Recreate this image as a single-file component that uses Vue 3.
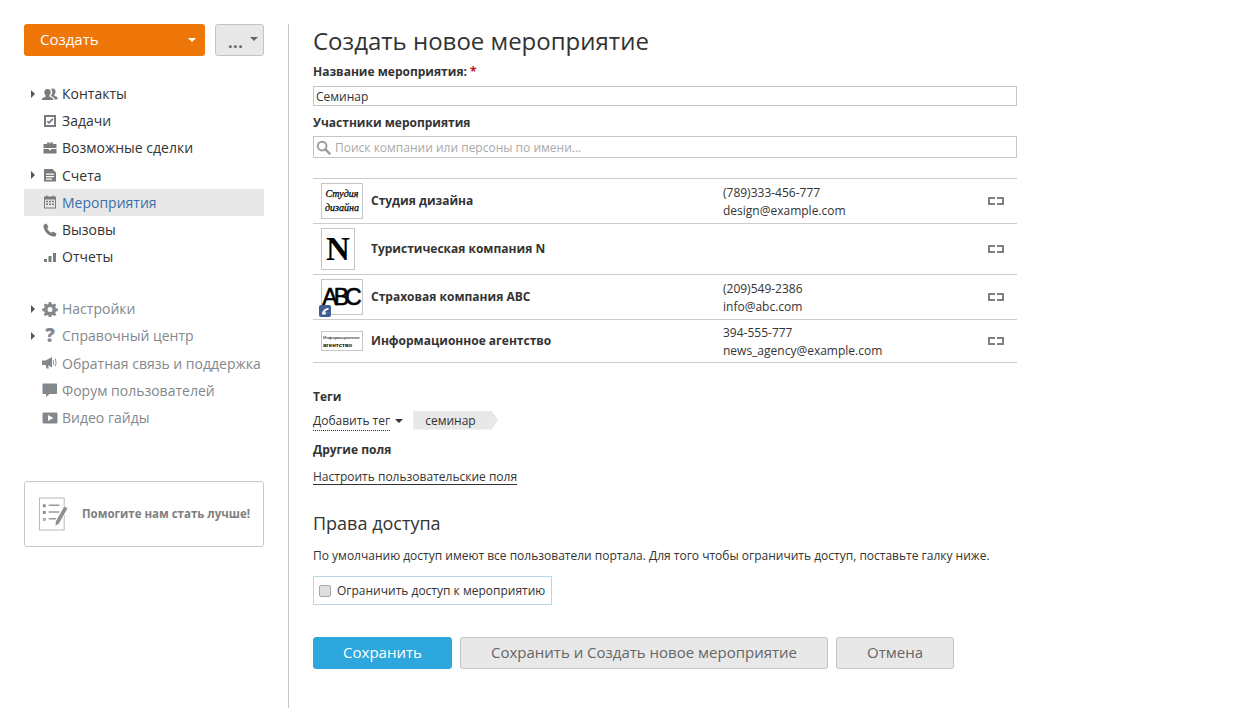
<script setup>
const navMain = [
  { label: 'Контакты', icon: 'contacts', arrow: true },
  { label: 'Задачи', icon: 'tasks' },
  { label: 'Возможные сделки', icon: 'deals' },
  { label: 'Счета', icon: 'invoices', arrow: true },
  { label: 'Мероприятия', icon: 'calendar', active: true },
  { label: 'Вызовы', icon: 'phone' },
  { label: 'Отчеты', icon: 'bars' },
]
const navExtra = [
  { label: 'Настройки', icon: 'gear', arrow: true },
  { label: 'Справочный центр', icon: 'help', arrow: true },
  { label: 'Обратная связь и поддержка', icon: 'mega' },
  { label: 'Форум пользователей', icon: 'forum' },
  { label: 'Видео гайды', icon: 'video' },
]
const icons = {
  contacts: 'M5.500 3a3.200 3.200 0 0 1 3.200 3.200c0 1.400-.6 2.700-1.400 3.300v1.100l3.200 1.400c.6.300.7.800.7 2H0c0-1.200.1-1.700.7-2l3-1.400V9.500C3 8.900 2.400 7.600 2.400 6.200A3.200 3.200 0 0 1 5.500 3zM10.500 2.500a3 3 0 0 1 3 3.100c0 1.300-.5 2.500-1.200 3.100v1l2.800 1.300c.4.200.4 1.100.4 2.500h-3c0-1.300-.4-1.900-1.200-2.300L9 10V9.500c.8-.9 1.300-2.100 1.300-3.400 0-1.300-.5-2.400-1.400-3.100.4-.3.900-.5 1.600-.5z',
  tasks: 'M2 2h12v12H2zM4 4v8h8V4zM7 11L4.700 8.700l1.300-1.300 1 1 3.200-3.200 1.300 1.300z',
  deals: 'M5 4V2.500h6V4h3.500v4h-13V4zm1.300 0h3.400V3.700H6.300zM1.500 9H7v1.200h2V9h5.500v4.500h-13z',
  invoices: 'M2 2h8.500L14 5.500v9H2zM4 6.500v1.200h8V6.500zM4 9v1.200h8V9zM4 11.500v1.200h6v-1.200z',
  calendar: 'M2 2.500h2V1.500h1.500v1h5v-1H12v1h2v12H2zm1 3v8h10v-8zm1 1.200h2v1.600H4zm3 0h2v1.600H7zm3 0h2v1.600h-2zm-6 2.800h2v1.600H4zm3 0h2v1.600H7zm3 0h2v1.600h-2z',
  phone: 'M4.500 1.500l2 3.500-1.300 1.500c.6 1.800 2.300 3.600 4.300 4.300L11 9.500l3.500 2-.6 2.200c-.3.600-1 .8-1.900.8C6.500 14 2 9.500 1.500 4.500c0-1 .2-1.700.8-2z',
  bars: 'M2 10h3v3H2zM6.500 7h3v6h-3zM11 4h3v9h-3z',
  gear: 'M6.800 1h2.400l.4 2 1.300.6 1.800-1.100 1.600 1.600-1.100 1.800.6 1.300 2 .4v2.400l-2 .4-.6 1.300 1.100 1.800-1.600 1.600-1.800-1.100-1.300.6-.4 2H6.800l-.4-2-1.300-.6-1.800 1.100-1.600-1.600 1.100-1.800-.6-1.300-2-.4V7.600l2-.4.6-1.300-1.100-1.800 1.600-1.600 1.800 1.100 1.300-.6zM8 6a2.500 2.500 0 1 0 0 5 2.500 2.500 0 0 0 0-5z',
  mega: 'M0 5.500h3.500L10 2v10.500L6 10.300l.8 3.200H4.500l-.9-3.500H0zM11.500 5c.8 1.200.8 3.800 0 5l-.7-.4c.6-1 .6-3.200 0-4.200zM13.500 3.500c1.300 2.200 1.300 5.800 0 8l-.7-.4c1-2 1-5.200 0-7.200z',
  forum: 'M1.500 1.500h12.500c.6 0 1 .4 1 1v8.500c0 .6-.4 1-1 1H7.500L4 15v-3H1.500c-.6 0-1-.4-1-1V2.500c0-.6.4-1 1-1z',
  video: 'M2 2.500h12c1 0 1.500.5 1.500 1.500v8c0 1-.5 1.500-1.500 1.500H2c-1 0-1.500-.5-1.500-1.500V4c0-1 .5-1.500 1.500-1.500zM6 5v6l5.500-3z',
}
const companies = [
  { name: 'Студия дизайна', kind: 'studio', phone: '(789)333-456-777', mail: 'design@example.com' },
  { name: 'Туристическая компания N', kind: 'tour' },
  { name: 'Страховая компания ABC', kind: 'abc', phone: '(209)549-2386', mail: 'info@abc.com', badge: true },
  { name: 'Информационное агентство', kind: 'agency', phone: '394-555-777', mail: 'news_agency@example.com' },
]
</script>

<template>
  <div class="page">
    <aside class="side">
      <div class="top-buttons">
        <button class="create" type="button"><span>Создать</span><i class="caret white"></i></button>
        <button class="more" type="button"><span>...</span><i class="caret grey"></i></button>
      </div>

      <nav class="nav">
        <a v-for="item in navMain" :key="item.label" class="nav-item" :class="{ active: item.active }">
          <i class="arrow" :class="{ on: item.arrow }"></i>
          <svg class="nav-icon" viewBox="0 0 16 16"><path :d="icons[item.icon]" /></svg>
          <span>{{ item.label }}</span>
        </a>
      </nav>

      <nav class="nav nav-extra">
        <a v-for="item in navExtra" :key="item.label" class="nav-item">
          <i class="arrow" :class="{ on: item.arrow }"></i>
          <b v-if="item.icon === 'help'" class="nav-q">?</b>
          <svg v-else class="nav-icon" viewBox="0 0 16 16"><path :d="icons[item.icon]" /></svg>
          <span>{{ item.label }}</span>
        </a>
      </nav>

      <div class="help-box">
        <svg class="help-icon" viewBox="0 0 32 36">
          <rect x="1.500" y="1.500" width="25.500" height="33" fill="#fff" stroke="#b5b5b5" />
          <path d="M5 8h3v3H5zM5 15h3v3H5z" fill="#8f8f8f" />
          <path d="M5.500 22.500h2v2h-2z" fill="none" stroke="#8f8f8f" />
          <path d="M11 9h11M11 16h11M11 23h8" stroke="#9a9a9a" stroke-width="1.500" />
          <path d="M27 9.500l4 2.500-9 16-4.500 3 .5-5.500z" fill="#8f8f8f" stroke="#fff" />
        </svg>
        <strong>Помогите нам стать лучше!</strong>
      </div>
    </aside>

    <main class="main">
      <h1>Создать новое мероприятие</h1>

      <label class="field-label">Название мероприятия: <em>*</em></label>
      <input class="text-input" type="text" value="Семинар" />

      <label class="field-label second">Участники мероприятия</label>
      <div class="search">
        <svg class="search-icon" viewBox="0 0 16 16">
          <circle cx="6.500" cy="6.500" r="4.700" fill="none" stroke="#9b9b9b" stroke-width="2" />
          <path d="M10 10l4.500 4.500" stroke="#9b9b9b" stroke-width="2.600" stroke-linecap="round" />
        </svg>
        <input type="text" placeholder="Поиск компании или персоны по имени..." />
      </div>

      <div class="companies">
        <div v-for="c in companies" :key="c.name" class="company">
          <div class="logo-cell">
            <div class="logo" :class="c.kind">
              <template v-if="c.kind === 'studio'"><span>Студия</span><span>дизайна</span></template>
              <template v-else-if="c.kind === 'tour'">N</template>
              <template v-else-if="c.kind === 'abc'">ABC</template>
              <template v-else><span>Информационное</span><span>агентство</span></template>
              <i v-if="c.badge" class="badge">
                <svg viewBox="0 0 12 12"><path d="M3 9.500C3 6 5.500 3.500 9.500 3v1.800c-2 .3-3.300 1.200-4 2.700h2l-1 2z" fill="#fff" /></svg>
              </i>
            </div>
          </div>
          <div class="company-name">{{ c.name }}</div>
          <div class="company-contact">
            <div>{{ c.phone }}</div>
            <div>{{ c.mail }}</div>
          </div>
          <svg class="expand" viewBox="0 0 16 8">
            <path d="M7 1H1v6h6M9 1h6v6H9" fill="none" stroke="#808080" stroke-width="2" />
          </svg>
        </div>
      </div>

      <label class="field-label tags-label">Теги</label>
      <div class="tags">
        <a class="add-tag">Добавить тег</a>
        <i class="tag-caret"></i>
        <span class="tag">семинар</span>
      </div>

      <label class="field-label other-label">Другие поля</label>
      <a class="custom-link">Настроить пользовательские поля</a>

      <h2>Права доступа</h2>
      <p class="note">По умолчанию доступ имеют все пользователи портала. Для того чтобы ограничить доступ, поставьте галку ниже.</p>
      <label class="restrict">
        <input type="checkbox" />
        <span>Ограничить доступ к мероприятию</span>
      </label>

      <div class="actions">
        <button class="btn primary save" type="button">Сохранить</button>
        <button class="btn save-new" type="button">Сохранить и Создать новое мероприятие</button>
        <button class="btn cancel" type="button">Отмена</button>
      </div>
    </main>
  </div>
</template>

<style>
html, body { margin: 0; background: #fff; }
</style>

<style scoped>
.page {
  display: flex;
  height: 708px;
  box-sizing: border-box;
  padding: 24px 0 0 24px;
  font-family: "Open Sans", sans-serif;
  color: #333;
  font-size: 12px;
  overflow: hidden;
}
.side { width: 240px; flex: none; }
.top-buttons { display: flex; gap: 10px; }
button { font-family: inherit; cursor: pointer; }
.create {
  width: 181px; height: 32px; border: 0; border-radius: 3px;
  background: #ef7608; color: #fff; font-size: 15px; text-align: left;
  padding: 0 9px 2px 16px; display: flex; align-items: center; justify-content: space-between;
}
.create .caret { margin-top: 2px; }
.more {
  width: 49px; height: 32px; border: 1px solid #c4c4c4; border-radius: 3px;
  background: #e8e8e8; color: #666; font-size: 16px; font-weight: 700; letter-spacing: .5px;
  padding: 0 5px 0 12px; display: flex; align-items: center; justify-content: space-between;
}
.more span { position: relative; top: 2px; }
.caret { width: 0; height: 0; border-left: 4px solid transparent; border-right: 4px solid transparent; }
.caret.white { border-top: 4px solid #fff; }
.caret.grey { border-top: 4px solid #666; margin-bottom: 2px; }

.nav { margin-top: 24px; display: flex; flex-direction: column; }
.nav-extra { margin-top: 24.900px; }
.nav-item {
  display: flex; align-items: center; height: 27.200px; font-size: 14px; color: #333;
  padding-left: 7px; box-sizing: border-box;
}
.nav-extra .nav-item { color: #83888d; }
.nav-extra .nav-item .nav-icon { fill: #83888d; }
.nav-item.active { background: #e8e8e8; color: #3a6ea8; }
.arrow { width: 11px; height: 8px; flex: none; }
.arrow.on {
  width: 0; height: 0; margin-right: 7px;
  border-top: 4px solid transparent; border-bottom: 4px solid transparent; border-left: 4px solid #555;
}
.nav-icon { width: 16px; height: 16px; flex: none; fill: #7b7b7b; margin-right: 4px; }
.nav-q { width: 16px; margin-right: 4px; text-align: center; font-size: 19px; font-weight: 800; color: #83888d; line-height: 1; }

.help-box {
  margin-top: 49.700px; height: 66px; box-sizing: border-box;
  border: 1px solid #c8c8c8; border-radius: 3px;
  display: flex; align-items: center; padding: 0 12px; gap: 13px;
}
.help-box strong { font-size: 11.500px; color: #7e7e7e; font-weight: 700; white-space: nowrap; }
.help-icon { width: 31px; height: 36px; flex: none; margin-left: 1px; }

.main {
  margin-left: 24px; padding-left: 24px; border-left: 1px solid #c8c8c8;
  width: 704px; flex: none; display: flex; flex-direction: column; align-items: flex-start;
}
h1 { font-size: 24px; font-weight: 400; line-height: 34px; height: 34px; margin: 0 0 4px; color: #333; }
.field-label { display: block; font-weight: 700; font-size: 12px; line-height: 20px; height: 18px; color: #333; }
.field-label em { color: #d0021b; font-style: normal; }
.text-input {
  margin-top: 6px; width: 100%; height: 20px; box-sizing: border-box;
  border: 1px solid #c6c6c6; padding: 0 2px; font: 12px "Open Sans", sans-serif; color: #333; outline: none;
}
.second { margin-top: 7px; }
.search {
  margin-top: 5px; width: 100%; height: 22px; box-sizing: border-box; border: 1px solid #c6c6c6;
  display: flex; align-items: center; padding-left: 2px;
}
.search-icon { width: 15px; height: 15px; flex: none; margin-right: 4px; }
.search input { flex: 1; border: 0; outline: none; padding: 0; font: 12px "Open Sans", sans-serif; color: #333; }
.search input::placeholder { color: #a9a9a9; opacity: 1; }

.companies { margin-top: 20px; width: 100%; border-top: 1px solid #ccc; }
.company {
  display: grid; grid-template-columns: 58px 352px 1fr 16px; align-items: center;
  border-bottom: 1px solid #ccc; padding-right: 13px;
}
.logo-cell { padding: 4px 0 4px 8px; display: flex; }
.logo {
  position: relative; box-sizing: border-box; width: 42px; border: 1px solid #c6c6c6; background: #fff; color: #000;
  display: flex; flex-direction: column; align-items: center; justify-content: center; overflow: visible;
}
.logo.studio { height: 36px; font: italic 400 10px/14px "Liberation Serif", serif; -webkit-text-stroke: .25px #000; }
.logo.tour { width: 34px; height: 42px; font: 700 33px/1 "Liberation Serif", serif; }
.logo.abc { height: 36px; font: 400 23px/1 "Liberation Sans", sans-serif; -webkit-text-stroke: .6px #000; letter-spacing: -4px; padding-right: 4px; }
.logo.agency { height: 20px; font-family: "Liberation Sans", sans-serif; align-items: flex-start; padding-left: 1px; }
.logo.agency span:first-child { font-size: 4.400px; line-height: 7px; }
.logo.agency span:last-child { font-size: 6px; font-weight: 700; line-height: 8px; }
.badge {
  position: absolute; left: -3px; bottom: -3px; width: 12px; height: 12px; border-radius: 2px;
  background: #3f5f94; display: block;
}
.badge svg { display: block; width: 12px; height: 12px; }
.company-name { font-weight: 700; font-size: 12px; color: #333; padding-bottom: 2px; }
.company-contact { padding: 4px 0 2px; line-height: 18px; min-height: 36px; font-size: 12px; color: #333; }
.expand { width: 16px; height: 8px; display: block; }

.tags-label { margin-top: 24px; }
.tags { margin-top: 5px; display: flex; align-items: center; height: 20px; }
.add-tag { border-bottom: 1px dotted #333; line-height: 15px; height: 18px; box-sizing: border-box; margin-top: 3px; }
.tag-caret {
  width: 0; height: 0; margin: 2px 10px 0 5px;
  border-left: 4px solid transparent; border-right: 4px solid transparent; border-top: 4px solid #333;
}
.tag {
  height: 19px; line-height: 19px; width: 85px; box-sizing: border-box; padding-left: 12px;
  background: #e8e8e8; clip-path: polygon(0 0, 92% 0, 100% 50%, 92% 100%, 0 100%);
}
.other-label { margin-top: 11px; line-height: 18px; }
.custom-link { margin-top: 10px; line-height: 15px; border-bottom: 1px solid #333; }
h2 { font-size: 18px; font-weight: 400; line-height: 24px; margin: 26px 0 0; color: #333; }
.note { margin: 12px 0 0; font-size: 12px; line-height: 18px; color: #333; }
.restrict {
  margin-top: 11px; height: 29px; box-sizing: border-box; border: 1px solid #b8d6ec;
  display: flex; align-items: center; padding: 0 5px; gap: 6px; width: 239px;
}
.restrict input {
  appearance: none; margin: 0; width: 12px; height: 12px; box-sizing: border-box;
  border: 1px solid #a8a8a8; border-radius: 2px; background: #dedede;
}
.actions { margin-top: 32px; display: flex; gap: 8px; }
.btn {
  height: 32px; box-sizing: border-box; border: 1px solid #c4c4c4; border-radius: 3px;
  background: #e8e8e8; color: #666; font-size: 15px; padding: 0 0 2px;
}
.btn.primary { background: #2da7dd; border-color: #2da7dd; color: #fff; }
.save { width: 139px; }
.save-new { width: 368px; }
.cancel { width: 118px; }
</style>
